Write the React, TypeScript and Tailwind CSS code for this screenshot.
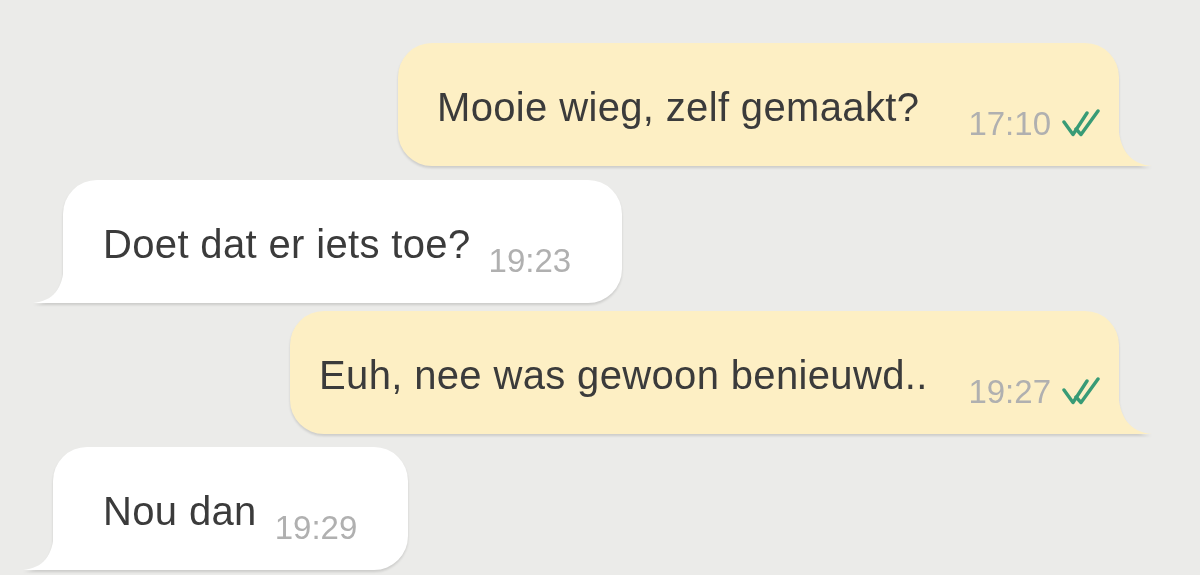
const messages = [
  { id: 1, out: true, text: "Mooie wieg, zelf gemaakt?", time: "17:10", box: "w-[721px] pl-[39px] mt-[43px]" },
  { id: 2, out: false, text: "Doet dat er iets toe?", time: "19:23", box: "w-[559px] pl-[40px] mt-[14px] ml-[63px]" },
  { id: 3, out: true, text: "Euh, nee was gewoon benieuwd..", time: "19:27", box: "w-[829px] pl-[29px] mt-[8px]" },
  { id: 4, out: false, text: "Nou dan", time: "19:29", box: "w-[355px] pl-[50px] mt-[13px] ml-[53px]" },
];

const ReadTicks = () => (
  <svg width="38" height="28" viewBox="0 0 38 28" fill="none" className="mt-[25px] ml-[11px] shrink-0">
    <path d="M2 13 L11 25.5 L25 4" stroke="#389b76" strokeWidth="3.4" strokeLinejoin="round" strokeLinecap="round" />
    <path d="M14 20 L19 25.5 L36 2" stroke="#389b76" strokeWidth="3.4" strokeLinejoin="round" strokeLinecap="round" />
  </svg>
);

const Bubble = ({ msg }: { msg: (typeof messages)[number] }) => {
  const fill = msg.out ? "#fdefc4" : "#ffffff";
  return (
    <div className={`relative h-[123px] drop-shadow-[0_2px_1px_rgba(0,0,0,0.13)] ${msg.out ? "self-end mr-[81px]" : "self-start"} ${msg.box}`}>
      <div
        className={`absolute inset-0 rounded-[34px] ${msg.out ? "bg-[#fdefc4] rounded-br-none" : "bg-white rounded-bl-none"}`}
      />
      {msg.out ? (
        <svg width="34" height="44" viewBox="0 0 34 44" className="absolute bottom-0 right-[-33px]">
          <path d="M0 0 C1 28 12 42 34 44 L0 44 Z" fill={fill} />
        </svg>
      ) : (
        <svg width="31" height="38" viewBox="0 0 31 38" className="absolute bottom-0 left-[-30px]">
          <path d="M31 0 C30 24 20 36 0 38 L31 38 Z" fill={fill} />
        </svg>
      )}
      <div className={`relative flex items-start h-full pt-[41px] ${msg.out ? "pr-[19px]" : ""}`}>
        <span className="text-[40px] leading-[46px] tracking-[0.35px] text-[#3b3b3b] whitespace-nowrap">{msg.text}</span>
        <span
          className={`text-[33px] leading-[38px] mt-[21px] text-[#b0b0b0] whitespace-nowrap ${msg.out ? "ml-auto" : "ml-[18px]"}`}
        >
          {msg.time}
        </span>
        {msg.out && <ReadTicks />}
      </div>
    </div>
  );
};

const App = () => {
  return (
    <div
      className="w-[1200px] h-[575px] overflow-hidden bg-[#ebebe9] flex flex-col"
      style={{ fontFamily: '"Liberation Sans", Arial, sans-serif' }}
    >
      {messages.map((m) => (
        <Bubble key={m.id} msg={m} />
      ))}
    </div>
  );
};

export default App;
